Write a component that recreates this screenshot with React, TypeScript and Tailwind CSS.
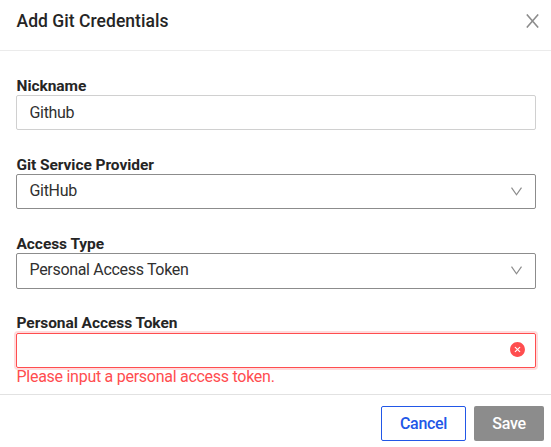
import { AiFillCloseCircle } from "react-icons/ai";

const labelClass = "block h-[18px] pl-[0.5px] text-[15.5px] leading-[18px] font-bold tracking-[-0.06px] whitespace-nowrap text-[#252525]";

function Select({ id, value, height }: { id: string; value: string; height: string }) {
  return (
    <button
      id={id}
      type="button"
      className={`flex w-full items-center justify-between rounded-xs border border-[#8c8c8c] pr-[13px] pl-[12.5px] text-[16px] tracking-[-0.32px] text-[#303030] ${height}`}
    >
      <span>{value}</span>
      <svg viewBox="0 0 11 9" className="h-[9px] w-[11px]" fill="none" stroke="#8c8c8c" strokeWidth="1.2">
        <path d="M0.5 0.7 5.5 7.8 10.5 0.7" />
      </svg>
    </button>
  );
}

export default function App() {
  return (
    <div className="flex h-[447px] w-[551px] flex-col overflow-hidden bg-white font-[Roboto,sans-serif]">
      <header className="flex h-[51px] shrink-0 items-center justify-between border-b border-[#ebebeb] pr-3 pb-[8px] pl-4">
        <h1 className="pl-[0.5px] text-[17.5px] font-medium tracking-[0.04px] text-[#252525]">Add Git Credentials</h1>
        <button type="button" aria-label="Close">
          <svg viewBox="0 0 13 14" className="block h-[14px] w-[13px]" fill="none" stroke="#8c8c8c" strokeWidth="1.5">
            <path d="M0.8 0.4 12.2 13.6M12.2 0.4 0.8 13.6" />
          </svg>
        </button>
      </header>
      <main className="flex h-[343px] shrink-0 flex-col pt-[26px] pr-[15px] pl-4">
        <div className="h-[79px]">
          <label htmlFor="nickname" className={labelClass}>Nickname</label>
          <input
            id="nickname"
            defaultValue="Github"
            className="block h-[35px] w-full rounded-xs border border-[#d0d0d0] pl-[12.5px] text-[16px] tracking-[-0.32px] text-[#303030] outline-none"
          />
        </div>
        <div className="h-[79px]">
          <label htmlFor="provider" className={labelClass}>Git Service Provider</label>
          <Select id="provider" value="GitHub" height="h-[35px] pb-px" />
        </div>
        <div className="h-[79px]">
          <label htmlFor="access" className={labelClass}>Access Type</label>
          <Select id="access" value="Personal Access Token" height="h-[36px] pb-[2px]" />
        </div>
        <div>
          <label htmlFor="token" className={`mb-px ${labelClass}`}>Personal Access Token</label>
          <div className="flex h-[35px] items-center rounded-xs border border-[#ff4d4f] pr-[9px] pb-[2px] shadow-[0_0_0_2px_#ff4d4f33]">
            <input id="token" className="min-w-0 flex-1 outline-none" />
            <AiFillCloseCircle className="h-[17px] w-[17px] text-[#ff4d4f]" />
          </div>
          <p className="pl-[0.5px] text-[16px] leading-[18px] tracking-[-0.27px] whitespace-nowrap text-[#ff4d4f]">Please input a personal access token.</p>
        </div>
      </main>
      <footer className="flex h-[53px] shrink-0 justify-end gap-2 border-t border-[#e2e2e2] pt-[11px] pr-[7px] text-[16px] font-medium tracking-[-0.3px]">
        <button type="button" className="h-[35px] w-[85px] rounded-xs border border-[#2257e7] text-[#2257e7]">Cancel</button>
        <button type="button" className="h-[35px] w-[70px] rounded-xs bg-[#8c8c8c] text-white">Save</button>
      </footer>
    </div>
  );
}
